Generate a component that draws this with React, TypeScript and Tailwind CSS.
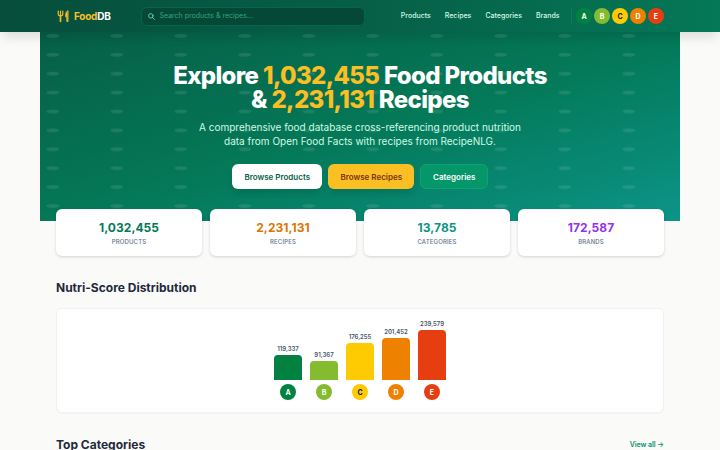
import React from "react";

const links = ["Products", "Recipes", "Categories", "Brands"];

const scores = [
  { grade: "A", count: "119,337", height: 25, color: "bg-[#038141]", text: "text-white" },
  { grade: "B", count: "91,367", height: 19, color: "bg-[#85bb2f]", text: "text-white" },
  { grade: "C", count: "176,255", height: 37, color: "bg-[#fecb02]", text: "text-gray-900" },
  { grade: "D", count: "201,452", height: 42, color: "bg-[#ee8100]", text: "text-white" },
  { grade: "E", count: "239,579", height: 50, color: "bg-[#e63e11]", text: "text-white" },
];

const stats = [
  { value: "1,032,455", label: "Products", color: "text-[#047857]" },
  { value: "2,231,131", label: "Recipes", color: "text-[#d97706]" },
  { value: "13,785", label: "Categories", color: "text-[#0d9488]" },
  { value: "172,587", label: "Brands", color: "text-[#9333ea]" },
];

function Header() {
  return (
    <header className="relative z-10 h-8 bg-linear-to-r from-[#064e3b] via-[#065f46] to-[#047857] shadow-[0_8px_12px_-3px_rgba(0,0,0,0.12)]">
      <div className="mx-auto flex h-8 w-[608px] items-center">
        <div className="flex w-[85px] shrink-0 items-center">
          <svg className="ml-px h-[13px] w-[13px] text-[#fbbf24]" viewBox="0 0 26 26" fill="none" stroke="currentColor" strokeLinecap="round">
            <path d="M2.5 2v6.500c0 2 1.500 3 4.500 3s4.500-1 4.500-3V2M7 2v21" strokeWidth="2.300" />
            <path d="M7 11.500V23" strokeWidth="3" />
            <path d="M21.500 1.500c-3 1-4.500 5-4.500 12h2.500V23h2z" fill="currentColor" strokeWidth="1.500" />
          </svg>
          <span className="ml-[4px] text-[10px] leading-[14px] font-bold tracking-[-0.25px] text-white">
            <span className="text-[#fbbf24]">Food</span>DB
          </span>
        </div>
        <div className="flex h-[19px] w-[224px] shrink-0 items-center rounded-[6px] border-[0.5px] border-[#04664b] bg-[#044835] pl-[6px]">
          <svg className="h-[7px] w-[7px] text-[#6ee7b7]" viewBox="0 0 14 14" fill="none" stroke="currentColor" strokeWidth="1.600" strokeLinecap="round">
            <circle cx="5.700" cy="5.700" r="4.500" />
            <path d="M9 9l4 4" />
          </svg>
          <span className="ml-[4.500px] text-[7px] leading-[10px] text-[#34a67d]">Search products &amp; recipes...</span>
        </div>
        <nav className="ml-auto flex items-center gap-[14px] text-[7px] leading-[10px] font-medium text-[#d1fae5]">
          {links.map((l) => (
            <span key={l}>{l}</span>
          ))}
        </nav>
        <div className="ml-[11.500px] flex items-center gap-[2px] border-l border-[#177557] pl-[4px]">
          {scores.map((s) => (
            <span key={s.grade} className={`flex h-4 w-4 items-center justify-center rounded-full text-[7px] leading-none font-bold ${s.color} ${s.text}`}>
              {s.grade}
            </span>
          ))}
        </div>
      </div>
    </header>
  );
}

function Hero() {
  return (
    <section className="relative mx-auto h-[189px] w-[640px] bg-linear-to-br from-[#065f46] via-[#047857] to-[#0d9488]">
      <svg className="absolute inset-0 h-full w-full opacity-10" viewBox="0 0 100 100" preserveAspectRatio="none">
        <defs>
          <pattern id="dots" width="10" height="10" patternUnits="userSpaceOnUse">
            <circle cx="2" cy="2" r="1" fill="white" />
          </pattern>
        </defs>
        <rect width="100" height="100" fill="url(#dots)" />
      </svg>
      <div className="relative flex flex-col items-center pt-8 text-center">
        <h1 className="text-[24px] leading-[24px] font-extrabold tracking-[-0.650px] whitespace-nowrap text-white">
          Explore <span className="text-[#fbbf24]">1,032,455</span> Food Products
          <br />
          &amp; <span className="text-[#fbbf24]">2,231,131</span> Recipes
        </h1>
        <p className="mt-2 text-[10px] leading-[14px] whitespace-nowrap text-[#d1fae5]">
          A comprehensive food database cross-referencing product nutrition
          <br />
          data from Open Food Facts with recipes from RecipeNLG.
        </p>
        <div className="mt-4 ml-[0.500px] flex items-center gap-[6px] text-[8px] leading-[12px] font-semibold whitespace-nowrap">
          <span className="flex h-[25px] w-[90px] items-center justify-center rounded-[6px] bg-white text-[#065f46] shadow-[0_5px_7px_-1px_rgba(0,0,0,0.12)]">Browse Products</span>
          <span className="flex h-[25px] w-[86px] items-center justify-center rounded-[6px] bg-[#fbbf24] text-[#78350f] shadow-[0_5px_7px_-1px_rgba(0,0,0,0.12)]">Browse Recipes</span>
          <span className="flex h-[25px] w-[68px] items-center justify-center rounded-[6px] border border-[#10a36f] bg-[#059669] text-white">Categories</span>
        </div>
      </div>
    </section>
  );
}

export default function App() {
  return (
    <div className="h-[450px] w-[720px] overflow-hidden bg-[#fafaf9] font-['Inter','Liberation_Sans',sans-serif]">
      <Header />
      <Hero />
      <main className="mx-auto w-[608px]">
        <div className="relative -mt-3 grid grid-cols-4 gap-2">
          {stats.map((s) => (
            <div key={s.label} className="flex h-[47px] flex-col items-center rounded-[6px] bg-white pt-[11px] shadow-[0_1px_3px_rgba(0,0,0,0.16)]">
              <div className={`text-[12px] leading-[16px] font-bold tracking-[0.050px] ${s.color}`}>{s.value}</div>
              <div className="mt-px text-[6px] leading-[9px] font-medium tracking-[0.150px] text-[#64748b] uppercase">{s.label}</div>
            </div>
          ))}
        </div>
        <h2 className="mt-6 text-[12px] leading-4 font-bold text-[#1e293b]">Nutri-Score Distribution</h2>
        <div className="mt-3 flex h-[105px] items-end justify-center gap-2 rounded-[6px] border border-[#f1f2f4] bg-white pb-[12px] shadow-[0_1px_1px_rgba(0,0,0,0.03)]">
          {scores.map((s) => (
            <div key={s.grade} className="flex w-7 flex-col items-center">
              <span className="mb-[2px] text-[6px] leading-[8px] font-semibold text-[#475569]">{s.count}</span>
              <div className={`w-7 rounded-t-[4px] ${s.color}`} style={{ height: s.height }} />
              <span className={`mt-1 flex h-4 w-4 items-center justify-center rounded-full text-[7px] leading-none font-bold ${s.color} ${s.text}`}>{s.grade}</span>
            </div>
          ))}
        </div>
        <div className="mt-6 flex items-center justify-between">
          <h2 className="text-[12px] leading-4 font-bold text-[#1e293b]">Top Categories</h2>
          <span className="text-[7px] leading-[10px] font-semibold tracking-[-0.050px] text-[#059669]">View all →</span>
        </div>
      </main>
    </div>
  );
}
